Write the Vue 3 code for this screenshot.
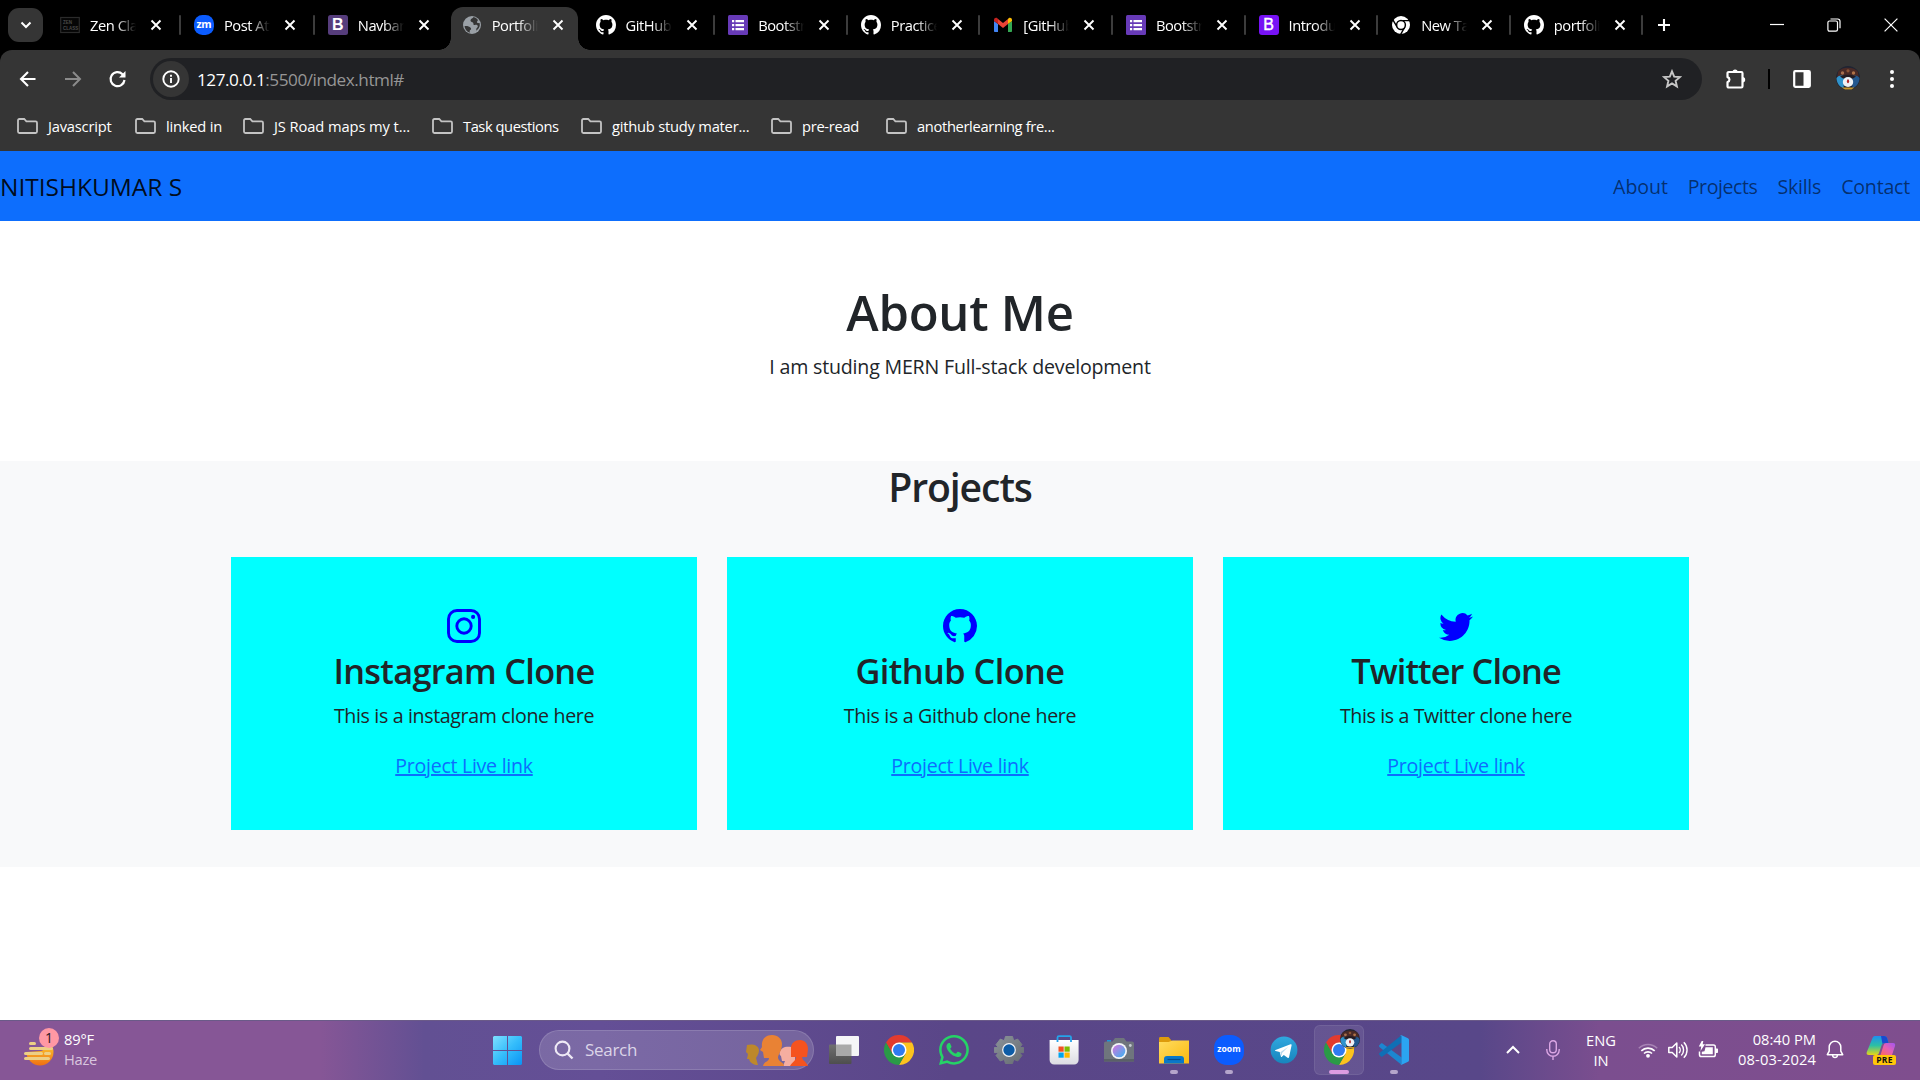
<script setup>
const tabs = [
  { icon: 'zen', label: 'ZEN CLASS', title: 'Zen Class' },
  { icon: 'zm', label: 'zm', title: 'Post Attendee' },
  { icon: 'boot4', label: 'B', title: 'Navbar · Boot' },
  { icon: 'globe', title: 'Portfolio', active: true },
  { icon: 'github', title: 'GitHub - n' },
  { icon: 'forms', title: 'Bootstrap' },
  { icon: 'github', title: 'Practice' },
  { icon: 'gmail', title: '[GitHub] A' },
  { icon: 'forms', title: 'Bootstrap' },
  { icon: 'boot5', label: 'B', title: 'Introduction' },
  { icon: 'chrome-mono', title: 'New Tab' },
  { icon: 'github', title: 'portfolio' },
]
const bookmarks = [
  { text: 'Javascript', width: 118, spacing: -0.2 },
  { text: 'linked in', width: 108, spacing: -0.21 },
  { text: 'JS Road maps my t...', width: 189, spacing: -0.09 },
  { text: 'Task questions', width: 149, spacing: -0.45 },
  { text: 'github study mater...', width: 190, spacing: -0.22 },
  { text: 'pre-read', width: 115, spacing: -0.3 },
  { text: 'anotherlearning fre...', width: 180, spacing: -0.34 },
]
const links = [
  { text: 'About', spacing: -0.1 },
  { text: 'Projects', spacing: -0.45 },
  { text: 'Skills', spacing: -0.25 },
  { text: 'Contact', spacing: -0.22 },
]
const projects = [
  { icon: 'insta', name: 'Instagram Clone', nameSpacing: -0.7, text: 'This is a instagram clone here', textSpacing: -0.35 },
  { icon: 'github', name: 'Github Clone', nameSpacing: -0.55, text: 'This is a Github clone here', textSpacing: -0.32 },
  { icon: 'twitter', name: 'Twitter Clone', nameSpacing: -0.89, text: 'This is a Twitter clone here', textSpacing: -0.38 },
]
const apps = [
  { icon: 'taskview' },
  { icon: 'chrome' },
  { icon: 'whatsapp' },
  { icon: 'settings' },
  { icon: 'store' },
  { icon: 'camera' },
  { icon: 'explorer', open: true },
  { icon: 'zoom', label: 'zoom', open: true },
  { icon: 'telegram' },
  { icon: 'chrome', active: true },
  { icon: 'vscode', open: true },
]
</script>

<template>
  <div class="screen">
    <svg class="sprite" aria-hidden="true">
      <defs>
        <linearGradient id="gWin" x1="0" y1="0" x2="1" y2="1"><stop offset="0" stop-color="#7fe0ff" /><stop offset=".5" stop-color="#35bdfb" /><stop offset="1" stop-color="#0a93f5" /></linearGradient>
        <linearGradient id="gSun" x1="0" y1="0" x2="0" y2="1"><stop offset="0" stop-color="#fbc02d" /><stop offset="1" stop-color="#ee6f12" /></linearGradient>
        <linearGradient id="gFolder" x1="0" y1="0" x2="1" y2="1"><stop offset="0" stop-color="#ffdc60" /><stop offset="1" stop-color="#fbb90f" /></linearGradient>
        <linearGradient id="gGear" x1="0" y1="0" x2="1" y2="1"><stop offset="0" stop-color="#8b9399" /><stop offset="1" stop-color="#666c72" /></linearGradient>
        <linearGradient id="gLens" x1="0" y1="0" x2="1" y2="1"><stop offset="0" stop-color="#d873dc" /><stop offset="1" stop-color="#37b4f2" /></linearGradient>
        <linearGradient id="gBag" x1="0" y1="0" x2="0" y2="1"><stop offset="0" stop-color="#ffffff" /><stop offset="1" stop-color="#dcdce2" /></linearGradient>
        <linearGradient id="gTele" x1="0" y1="0" x2="0" y2="1"><stop offset="0" stop-color="#30a8df" /><stop offset="1" stop-color="#1885bd" /></linearGradient>
        <linearGradient id="gDark" x1="0" y1="0" x2="0" y2="1"><stop offset="0" stop-color="#707070" /><stop offset="1" stop-color="#4e4e4e" /></linearGradient>
        <linearGradient id="gCopA" x1="0" y1="0" x2="0" y2="1"><stop offset="0" stop-color="#1d8ff0" /><stop offset=".5" stop-color="#2cc0a4" /><stop offset="1" stop-color="#e8d616" /></linearGradient>
        <linearGradient id="gCopB" x1="0" y1="1" x2="1" y2="0"><stop offset="0" stop-color="#ff6a5c" /><stop offset=".5" stop-color="#e560b4" /><stop offset="1" stop-color="#a055f4" /></linearGradient>
      </defs>

      <symbol id="zen" viewBox="0 0 20 20"><rect x=".7" y="2.5" width="18.6" height="15" fill="#060606" stroke="#2b2b2b" stroke-width="1.2" /></symbol>
      <symbol id="zm" viewBox="0 0 20 20"><rect width="20" height="20" rx="8.5" fill="#0b5cff" /></symbol>
      <symbol id="boot4" viewBox="0 0 20 20"><rect width="20" height="20" rx="2.5" fill="#563d7c" /></symbol>
      <symbol id="boot5" viewBox="0 0 20 20"><rect width="20" height="20" rx="3" fill="#7712f5" /></symbol>
      <symbol id="globe" viewBox="0 0 20 20"><circle cx="10" cy="10" r="9" fill="#9aa0a6" /><path d="M2.500 11.200c2.200-.4 4.900.2 6.100 1.500.9 1 .4 1.900-.4 2.400-.7.500-.5 1.600-.4 2.700A8.300 8.300 0 0 1 2.500 11.200zM11.500 2.100c-.3 1.300-2 1.500-2.700 2.500-.6.900-.2 2 .9 2.300 1.200.3 1.900 1 1.700 2-.1.900.8 1.300 1.600 1 1.200-.4 2.500.2 2.800 1.100.2.800-.5 1.600-1.300 2.200l-.4 2.500a8.100 8.100 0 0 0 3.700-7.500l-1.900-.2c-1.100-.1-1.300-1.100-.6-1.700l.7-1.200a8 8 0 0 0-4.500-3z" fill="#353535" /></symbol>
      <symbol id="github" viewBox="0 0 16 16"><path fill="currentColor" d="M8 0C3.58 0 0 3.58 0 8c0 3.54 2.29 6.53 5.47 7.59.4.07.55-.17.55-.38 0-.19-.01-.82-.01-1.49-2.01.37-2.53-.49-2.69-.94-.09-.23-.48-.94-.82-1.13-.28-.15-.68-.52-.01-.53.63-.01 1.08.58 1.23.82.72 1.21 1.87.87 2.33.66.07-.52.28-.87.51-1.07-1.78-.2-3.64-.89-3.64-3.95 0-.87.31-1.59.82-2.15-.08-.2-.36-1.02.08-2.12 0 0 .67-.21 2.2.82.64-.18 1.32-.27 2-.27s1.36.09 2 .27c1.53-1.04 2.2-.82 2.2-.82.44 1.1.16 1.92.08 2.12.51.56.82 1.27.82 2.15 0 3.07-1.87 3.75-3.65 3.95.29.25.54.73.54 1.48 0 1.07-.01 1.93-.01 2.2 0 .21.15.46.55.38A8.01 8.01 0 0 0 16 8c0-4.42-3.58-8-8-8" /></symbol>
      <symbol id="forms" viewBox="0 0 20 20"><rect width="20" height="20" rx="1.5" fill="#673ab7" /><path d="M4 5h2.200v2.200H4zM7.500 5H16v2.200H7.500zM4 9h2.200v2.200H4zM7.500 9H16v2.200H7.500zM4 13h2.200v2.200H4zM7.500 13H16v2.200H7.500z" fill="#fff" /></symbol>
      <symbol id="gmail" viewBox="0 0 20 20"><path d="M1 6v10.200c0 .5.3.8.8.8H5V9z" fill="#4285f4" /><path d="M15 9v8h3.200c.5 0 .8-.3.8-.8V6z" fill="#34a853" /><path d="M15 4v5l4-3V4.800C19 3 17 2.300 15.600 3.300z" fill="#fbbc04" /><path d="M5 9V4l5 3.900L15 4v5l-5 3.900z" fill="#ea4335" /><path d="M1 4.800V6l4 3V4l-.6-.7C3 2.300 1 3 1 4.800z" fill="#c5221f" /></symbol>
      <symbol id="chrome-mono" viewBox="0 0 20 20"><circle cx="10" cy="10" r="9" fill="#fff" /><path d="M10 5.600h8.600M6.200 12.200 1.900 4.800M13.800 12.200 9.500 19.600" stroke="#000" stroke-width="1.4" /><circle cx="10" cy="10" r="4.400" fill="#fff" stroke="#000" stroke-width="1.5" /></symbol>

      <symbol id="insta" viewBox="0 0 34 34"><rect x="1.5" y="1.5" width="31" height="31" rx="8.5" fill="none" stroke="currentColor" stroke-width="2.9" /><circle cx="17" cy="17" r="7.200" fill="none" stroke="currentColor" stroke-width="2.900" /><circle cx="26.100" cy="7.900" r="2.050" fill="currentColor" /></symbol>
      <symbol id="twitter" viewBox="0 0 16 16"><path fill="currentColor" d="M5.026 15c6.038 0 9.341-5.003 9.341-9.334q.002-.211-.006-.422A6.700 6.700 0 0 0 16 3.542a6.700 6.700 0 0 1-1.889.518 3.300 3.300 0 0 0 1.447-1.817 6.500 6.500 0 0 1-2.087.793A3.286 3.286 0 0 0 7.875 6.030a9.320 9.320 0 0 1-6.767-3.429 3.290 3.290 0 0 0 1.018 4.382A3.300 3.300 0 0 1 .64 6.575v.045a3.290 3.290 0 0 0 2.632 3.218 3.200 3.200 0 0 1-.865.115 3 3 0 0 1-.614-.057 3.280 3.280 0 0 0 3.067 2.277A6.600 6.600 0 0 1 .78 13.580a6 6 0 0 1-.78-.045A9.340 9.340 0 0 0 5.026 15" /></symbol>
      <symbol id="photo" viewBox="0 0 24 24"><circle cx="12" cy="12" r="12" fill="#1f2433" /><path d="M2 6c3-5 16-6 20 0l1 7H1z" fill="#4a2a26" /><path d="M.5 12c2-3 5-3 8-2l-1 12c-4-1-7-5-7-10z" fill="#2f93cc" /><path d="M23.500 12c-2-3-5-3-8-2l1 12c4-1 7-5 7-10z" fill="#23588f" /><circle cx="6.500" cy="7" r="1.700" fill="#a9704f" /><circle cx="12" cy="4.800" r="1.600" fill="#8c5334" /><circle cx="17.500" cy="7" r="1.700" fill="#b07348" /><path d="M4 10.500c4-2.500 12-2.500 16 0l-3 2H7z" fill="#241c22" /><ellipse cx="12" cy="16" rx="5.200" ry="5" fill="#eef2f6" /><ellipse cx="12" cy="15.300" rx="1.100" ry="2" fill="#b32a2a" /><path d="M5.500 21.500h13l-3 2H9z" fill="#c9982a" /></symbol>

      <symbol id="taskview" viewBox="0 0 30 30"><rect x="0" y="9.500" width="22.500" height="19.500" rx="1" fill="url(#gDark)" /><rect x="7" y="1" width="23" height="20" rx="1" fill="#f5f5f7" /><rect x="7" y="9.500" width="15.500" height="11.500" fill="#a9a9a9" /></symbol>
      <symbol id="chrome" viewBox="0 0 30 30"><path d="M2 7.500A15 15 0 0 1 28 7.500H15L8.500 18.750z" fill="#e33b2e" /><path d="M28 7.500A15 15 0 0 1 15 30l6.500-11.250L15 7.500z" fill="#fcc31e" /><path d="M15 30A15 15 0 0 1 2 7.500l6.500 11.250h13z" fill="#2a9a47" /><circle cx="15" cy="15" r="7.500" fill="#fff" /><circle cx="15" cy="15" r="6" fill="#2f7bf0" /></symbol>
      <symbol id="whatsapp" viewBox="0 0 16 16"><path fill="#25d366" d="M13.601 2.326A7.850 7.850 0 0 0 7.994 0C3.627 0 .068 3.558.064 7.926c0 1.399.366 2.760 1.057 3.965L0 16l4.204-1.102a7.900 7.900 0 0 0 3.790.965h.004c4.368 0 7.926-3.558 7.930-7.930A7.900 7.900 0 0 0 13.600 2.326zM7.994 14.521a6.600 6.600 0 0 1-3.356-.92l-.24-.144-2.494.654.666-2.433-.156-.251a6.560 6.560 0 0 1-1.007-3.505c0-3.626 2.957-6.584 6.591-6.584a6.560 6.560 0 0 1 4.660 1.931 6.560 6.560 0 0 1 1.928 4.660c-.004 3.639-2.961 6.592-6.592 6.592m3.615-4.934c-.197-.099-1.170-.578-1.353-.646-.182-.065-.315-.099-.445.099-.133.197-.513.646-.627.775-.114.133-.232.148-.43.050-.197-.1-.836-.308-1.592-.985-.59-.525-.985-1.175-1.103-1.372-.114-.198-.011-.304.088-.403.087-.088.197-.232.296-.346.1-.114.133-.198.198-.33.065-.134.034-.248-.015-.347-.05-.099-.445-1.076-.612-1.470-.16-.389-.323-.335-.445-.34-.114-.007-.247-.007-.38-.007a.73.73 0 0 0-.529.247c-.182.198-.691.677-.691 1.654s.71 1.916.81 2.049c.098.133 1.394 2.132 3.383 2.992.47.205.84.326 1.129.418.475.152.904.129 1.246.080.38-.058 1.171-.48 1.338-.943.164-.464.164-.86.114-.943-.049-.084-.182-.133-.38-.232" /></symbol>
      <symbol id="settings" viewBox="0 0 30 30"><path d="M11.500 1.500h7l1.200 4.200 4-1.600L28 9.700 25.400 12.600H29.600v5h-4.200L28 20.500 23.700 26l-4-1.600-1.200 4.100h-7l-1.200-4.100-4 1.600L2 20.500l2.600-2.900H.4v-5h4.200L2 9.700 6.300 4.100l4 1.600z" fill="url(#gGear)" stroke="url(#gGear)" stroke-width="1" stroke-linejoin="round" /><circle cx="15" cy="15" r="6.900" fill="#f2f5f8" /><circle cx="15" cy="15" r="5.700" fill="#0d5ca6" /></symbol>
      <symbol id="store" viewBox="0 0 30 30"><path d="M8.500 7V2.600c0-.8.500-1.400 1.400-1.400h10.700c.9 0 1.400.6 1.400 1.400V7" fill="none" stroke="#25a3ea" stroke-width="1.800" /><path d="M.6 5h29v20a4.500 4.500 0 0 1-4.500 4.500h-20A4.500 4.500 0 0 1 .6 25z" fill="url(#gBag)" /><path d="M7.600 5h1.800v2H7.600zM21.100 5h1.800v2h-1.800z" fill="#25a3ea" /><path d="M9.500 11.500h5.200v5.200H9.500z" fill="#f25022" /><path d="M15.500 11.500h5.200v5.200h-5.200z" fill="#7fba00" /><path d="M9.500 17.500h5.200v5.200H9.500z" fill="#00a4ef" /><path d="M15.500 17.500h5.200v5.200h-5.200z" fill="#ffb900" /></symbol>
      <symbol id="camera" viewBox="0 0 30 30"><path d="M3 5h4v3H3z" fill="#1b95d8" /><path d="M0 8.500C0 7.200.8 6.500 2 6.500h6.500L11 3h9l2.500 3.500H28c1.200 0 2 .7 2 2V26.500H0z" fill="#6f757d" /><path d="M0 24h30v2.500H0z" fill="#5a6067" /><circle cx="15" cy="16" r="8" fill="#f4f5f8" /><circle cx="15" cy="16" r="6.300" fill="url(#gLens)" /><circle cx="26.300" cy="10.500" r="1.400" fill="#c5cbd2" /></symbol>
      <symbol id="explorer" viewBox="0 0 30 30"><path d="M0 3.500C0 2.500.6 2 1.500 2h8l3 3.500V12H0z" fill="#dd9b0c" /><path d="M0 10V7h9.500l4-1.500H30v23H0z" fill="url(#gFolder)" /><path d="M5 28.500V24c0-2 1-3 3-3h14c2 0 3 1 3 3v4.500z" fill="#0a78c8" /><path d="M8.500 24.500h13" stroke="#064c8c" stroke-width="1.200" /></symbol>
      <symbol id="zoom" viewBox="0 0 30 30"><rect width="30" height="30" rx="13" fill="#0b5cff" /></symbol>
      <symbol id="telegram" viewBox="0 0 30 30"><circle cx="15" cy="15" r="13.400" fill="url(#gTele)" /><path d="M6.500 15 21.500 9.200c.7-.2 1.300.2 1.100 1.100l-2.500 11.800c-.2.900-.8 1-1.500.6l-3.800-2.800-1.900 1.800c-.4.400-.9.300-1-.3l-1.200-4.300-4.100-1.200c-.8-.2-.8-.7-.1-.9z" fill="#fff" /><path d="m11.300 17.200 8-5.400-6.200 6.200-.4 3.200z" fill="#b9d9ec" /></symbol>
      <symbol id="vscode" viewBox="0 0 30 30"><path d="M.3 10.300 2 8.500c.4-.4 1-.4 1.500-.1L22.600 22.500V29.500c-.6-.1-1-.4-1.400-.7L.4 11.900c-.5-.5-.5-1.100-.1-1.600z" fill="#1c86d1" /><path d="M.3 19.700 2 21.500c.4.400 1 .4 1.500.1L22.600 7.500V.5c-.6.100-1 .4-1.400.7L.4 18.100c-.5.500-.5 1.100-.1 1.600z" fill="#0f6fb5" /><path d="M22.600.3 29 3.200c.6.300 1 .9 1 1.600v20.400c0 .7-.4 1.300-1 1.600l-6.400 2.900c-.5.100-1-.1-1.400-.5.500.4 1.300.1 1.300-.7V1.500c0-.8-.8-1.100-1.300-.7.400-.4.900-.6 1.400-.5z" fill="#2ba4f1" /></symbol>
    </svg>

    <header class="browser">
      <div class="strip">
        <div class="tabsearch"><svg width="12" height="8" viewBox="0 0 12 8"><path d="M1.500 1.500 6 6l4.500-4.500" fill="none" stroke="#fff" stroke-width="2" /></svg></div>
        <div class="tabs">
          <div v-for="(tab, i) in tabs" :key="i" class="tab" :class="{ active: tab.active, bar: !tab.active && i !== 2, early: i < 4 }">
            <div class="favicon">
              <svg width="20" height="20"><use :href="'#' + tab.icon" /></svg>
              <span v-if="tab.label" class="label" :class="tab.icon">{{ tab.label }}</span>
            </div>
            <span class="title">{{ tab.title }}</span>
            <svg class="close" viewBox="0 0 12 12"><path d="m1.500 1.500 9 9m0-9-9 9" stroke="#fff" stroke-width="1.900" /></svg>
          </div>
        </div>
        <svg class="plus" viewBox="0 0 14 14"><path d="M7 1v12M1 7h12" stroke="#fff" stroke-width="2.100" /></svg>
        <div class="controls">
          <svg width="14" height="14" viewBox="0 0 14 14"><path d="M0 6.500h14" stroke="#fff" stroke-width="1.200" /></svg>
          <svg width="14" height="14" viewBox="0 0 14 14"><rect x=".9" y="3" width="9.600" height="10.200" rx="1.600" fill="none" stroke="#fff" stroke-width="1.200" /><path d="M3.500 1h7.200a2.300 2.300 0 0 1 2.300 2.300v7" fill="none" stroke="#fff" stroke-width="1.200" /></svg>
          <svg width="14" height="14" viewBox="0 0 14 14"><path d="m.6.600 12.800 12.800M13.400.6.600 13.400" stroke="#fff" stroke-width="1.200" /></svg>
        </div>
      </div>

      <div class="toolbar">
        <svg class="nav" viewBox="0 0 20 20"><path d="M17.500 10H3.500M10 3l-7 7 7 7" fill="none" stroke="#fff" stroke-width="2.100" /></svg>
        <svg class="nav" viewBox="0 0 20 20"><path d="M2 10h14.500M10 3l7 7-7 7" fill="none" stroke="#8b8b8b" stroke-width="2" /></svg>
        <svg class="nav" viewBox="0 0 20 20"><path d="M16.500 11A7 7 0 1 1 14.500 5.200l2 2" fill="none" stroke="#fff" stroke-width="2.200" /><path d="M17.500 2v6.500H11z" fill="#fff" /></svg>
        <div class="omnibox">
          <div class="info"><svg width="18" height="18" viewBox="0 0 18 18"><circle cx="9" cy="9" r="7.700" fill="none" stroke="#fff" stroke-width="1.900" /><path d="M9 8v5M9 4.800v1.900" stroke="#fff" stroke-width="1.900" /></svg></div>
          <span class="url">127.0.0.1<i>:5500/index.html#</i></span>
          <svg class="star" viewBox="0 0 20 20"><path d="m10 2.300 2.200 5.300 5.700.5-4.300 3.700 1.300 5.600-4.900-3-4.900 3 1.300-5.600L2.100 8.100l5.700-.5z" fill="none" stroke="#c7c7c7" stroke-width="1.900" /></svg>
        </div>
        <div class="actions">
          <svg width="22" height="22" viewBox="0 0 22 22"><path d="M2.500 5.200c0-.7.500-1.200 1.200-1.200h12.600c.7 0 1.200.5 1.200 1.200v13.100c0 .7-.5 1.200-1.200 1.200H3.700c-.7 0-1.200-.5-1.200-1.200v-4.200c2.600-.8 2.600-4.200 0-5z" fill="none" stroke="#fff" stroke-width="2.200" stroke-linejoin="round" /><path d="M7.500 4a2.600 2.600 0 0 1 5.200 0zM17.500 9a2.700 2.700 0 0 1 0 5.400z" fill="#fff" /></svg>
          <b class="rule"></b>
          <svg width="18" height="18" viewBox="0 0 18 18"><rect x="1.200" y="1.200" width="15.600" height="15.600" rx="1" fill="none" stroke="#fff" stroke-width="2.200" /><path d="M10.500 1H17v16h-6.500z" fill="#fff" /></svg>
          <svg class="avatar"><use href="#photo" /></svg>
          <svg width="4" height="18" viewBox="0 0 4 18"><circle cx="2" cy="2" r="2" fill="#fff" /><circle cx="2" cy="9" r="2" fill="#fff" /><circle cx="2" cy="16" r="2" fill="#fff" /></svg>
        </div>
      </div>

      <div class="bookmarks">
        <div v-for="b in bookmarks" :key="b.text" class="bookmark" :style="{ width: b.width + 'px', letterSpacing: b.spacing + 'px' }">
          <svg width="21" height="16" viewBox="0 0 21 16"><path d="M1 2.400C1 1.500 1.500 1 2.400 1h4.800l2.200 2.300h9.200c.9 0 1.400.5 1.400 1.400v8.900c0 .9-.5 1.400-1.400 1.400H2.400c-.9 0-1.400-.5-1.400-1.400z" fill="none" stroke="#c4c4c4" stroke-width="1.800" /></svg>
          <span>{{ b.text }}</span>
        </div>
      </div>
    </header>

    <main class="page">
      <nav class="navbar">
        <a class="brand">NITISHKUMAR S</a>
        <div class="links"><a v-for="l in links" :key="l.text" :style="{ letterSpacing: l.spacing + 'px' }">{{ l.text }}</a></div>
      </nav>
      <section class="about">
        <h1>About Me</h1>
        <p>I am studing MERN Full-stack development</p>
      </section>
      <section class="projects">
        <h2>Projects</h2>
        <div class="row">
          <article v-for="p in projects" :key="p.name" class="card">
            <svg class="brandicon"><use :href="'#' + p.icon" /></svg>
            <h3 :style="{ letterSpacing: p.nameSpacing + 'px' }">{{ p.name }}</h3>
            <p :style="{ letterSpacing: p.textSpacing + 'px' }">{{ p.text }}</p>
            <a>Project Live link</a>
          </article>
        </div>
      </section>
    </main>

    <footer class="taskbar">
      <div class="weather">
        <div class="haze">
          <svg width="32" height="36" viewBox="0 0 32 36"><path d="M2.500 20a13.500 13.500 0 0 0 27 0c0-2-.4-4-1.200-5.500L17 19z" fill="url(#gSun)" /><path d="M6.500 11.500h4M6.500 16.500h21M1.500 21.500h16M21.500 21.500h4M1.500 26.500h23" stroke="#edcf85" stroke-width="3" stroke-linecap="round" /></svg>
          <span class="badge">1</span>
        </div>
        <div class="lines"><span class="temp">89°F</span><span class="cond">Haze</span></div>
      </div>

      <div class="center">
        <svg width="29" height="29" viewBox="0 0 29 29"><path d="M1 0h13v14H0V1zM15 0h13l1 1v13H15zM0 15h14v14H1l-1-1zM15 15h14v13l-1 1H15z" fill="url(#gWin)" /></svg>
        <div class="search">
          <svg width="20" height="20" viewBox="0 0 20 20"><circle cx="8.500" cy="8.500" r="6.900" fill="none" stroke="#eee9f5" stroke-width="2.100" /><path d="m13.500 13.500 5 5" stroke="#eee9f5" stroke-width="2.400" /></svg>
          <span>Search</span>
          <svg class="people" width="64" height="32" viewBox="0 0 64 32"><path d="M2 10c4-1 11-1 12 5 0 4-2 6-3 8l2 7c-4 0-8-2-9-6H2l1-5-2-2z" fill="#bd882b" /><path d="M36 21c-3-1-1-8 4-9s10 0 10 4v15H38l2-5h-3z" fill="#f5aea0" /><path d="M18 31c1-5 6-4 6-8h-5l-1-6-3-2 2-3C16 5 20 0 27 0c6 0 10 4 10 9 0 6-3 9-4 13 0 5 6 5 6 9z" fill="#e98234" /><path d="M46 22V13c0-5 4-8 9-8 5 0 8 4 8 9l-1 8h-5l1 3c2 1 4 4 5 6H45c2-4 6-5 6-9z" fill="#f5531f" /></svg>
        </div>
        <div class="apps">
          <div v-for="(a, i) in apps" :key="i" class="app" :class="{ active: a.active, open: a.open }">
            <svg class="appicon"><use :href="'#' + a.icon" /></svg>
            <span v-if="a.label" class="applabel">{{ a.label }}</span>
            <svg v-if="a.active" class="profile"><use href="#photo" /></svg>
          </div>
        </div>
      </div>

      <div class="tray">
        <svg width="14" height="10" viewBox="0 0 14 10"><path d="m1 8 6-6 6 6" fill="none" stroke="#fff" stroke-width="2" /></svg>
        <svg class="mic" width="14" height="20" viewBox="0 0 14 20"><rect x="3.700" y=".8" width="6.600" height="12" rx="3.300" fill="none" stroke="#dba6e4" stroke-width="1.400" /><path d="M.8 9v1a6.200 6.200 0 0 0 12.400 0V9M7 16.200V20" fill="none" stroke="#dba6e4" stroke-width="1.400" /></svg>
        <div class="lang lines"><span>ENG</span><span>IN</span></div>
        <svg class="wifi" width="20" height="16" viewBox="0 0 20 16"><path d="M.8 6.200a13 13 0 0 1 18.400 0" fill="none" stroke="#a783b4" stroke-width="1.500" /><path d="M3.300 8.900a9.500 9.500 0 0 1 13.400 0M6 11.500a5.700 5.700 0 0 1 8 0" fill="none" stroke="#fff" stroke-width="1.600" /><circle cx="10" cy="13.800" r="1.900" fill="#fff" /></svg>
        <svg width="20" height="18" viewBox="0 0 20 18"><path d="M.8 6.500v5h3.400L8.800 16V2L4.200 6.500z" fill="none" stroke="#fff" stroke-width="1.500" stroke-linejoin="round" /><path d="M11 6a4.300 4.300 0 0 1 0 6M13.300 3.500a7.800 7.800 0 0 1 0 11M15.800 1.200a11 11 0 0 1 0 15.600" fill="none" stroke="#fff" stroke-width="1.400" /></svg>
        <svg width="20" height="18" viewBox="0 0 20 18"><path d="M7.500 4h8a1.800 1.800 0 0 1 1.800 1.800v7.900a1.800 1.800 0 0 1-1.800 1.800H3.300a1.800 1.800 0 0 1-1.800-1.800V10.500" fill="none" stroke="#fff" stroke-width="1.500" /><path d="M7.500 6.200h7.300v7H3.800v-2.500l2.700-.5z" fill="#fff" /><path d="M17.800 7.500h1.200c.6 0 1 .4 1 1v2.400c0 .6-.4 1-1 1h-1.200zM3.700 0h1.600l-.6 3.200H7L2.500 10l.7-4.600H.8z" fill="#fff" /></svg>
        <div class="clock lines"><span>08:40 PM</span><span class="date">08-03-2024</span></div>
        <svg width="18" height="20" viewBox="0 0 18 20"><path d="M9 1.200c-3.300 0-5.800 2.600-5.800 5.900v4L1.300 14.700h15.400l-1.900-3.600v-4c0-3.300-2.500-5.900-5.800-5.900zM6.500 15c.2 1.700 1.100 2.600 2.500 2.600s2.300-.9 2.500-2.600" fill="none" stroke="#fff" stroke-width="1.500" stroke-linejoin="round" /></svg>
        <div class="copilot">
          <svg width="30" height="30" viewBox="0 0 30 30"><path d="M6.500 3C7 1.500 8 1 9.500 1H18c2 0 2.800 1 3.300 2.500L22.500 8H19c-2 0-3 1-3.500 2.500L13 18c-.6 1.600-1.500 2-3 2H3C.9 20 .2 18.800.8 17z" fill="url(#gCopA)" /><path d="M15 1h3c2 0 2.800 1 3.300 2.500L22.500 8H19c-1 0-1.900.3-2.500 1z" fill="#1949cf" /><path d="M17.500 10.500C18 8.800 19 8 20.500 8H27c1.800 0 2.600 1.200 2 3l-3 9H14.500z" fill="url(#gCopB)" /></svg>
          <span class="pre">PRE</span>
        </div>
      </div>
    </footer>
  </div>
</template>

<style>
body { margin: 0; background: #fff; overflow: hidden; }
</style>

<style scoped>
* { box-sizing: border-box; }
.screen { width: 1920px; height: 1080px; display: flex; flex-direction: column; overflow: hidden; background: #fff; font-family: "Open Sans", "Noto Sans", sans-serif; color: #212529; white-space: nowrap; }
.sprite { position: absolute; width: 0; height: 0; }
svg { display: block; flex: none; }
h1, h2, h3, p { margin: 0; }

.browser { height: 151px; background: #000; display: flex; flex-direction: column; font-size: 14.7px; color: #fff; }
.strip { height: 50px; display: flex; align-items: center; padding-left: 8px; }
.tabsearch { width: 35px; height: 34px; border-radius: 11px; background: #353535; display: flex; align-items: center; justify-content: center; }
.tabs { display: flex; height: 50px; margin-left: 5px; }
.tab { position: relative; width: 132.6px; height: 50px; padding-left: 12px; display: flex; align-items: center; }
.tab.early { width: 133.9px; }
.tab.active { height: 43px; margin-top: 7px; padding-bottom: 7px; }
.tab.active::before { content: ""; position: absolute; left: 1px; right: 6px; top: 0; bottom: 0; background: #353535; border-radius: 12px 12px 0 0; }
.tab.active::after { content: ""; position: absolute; left: -11px; right: -6px; bottom: 0; height: 12px; background: radial-gradient(circle at 0 0, transparent 11.5px, #353535 12px) left / 12px 12px no-repeat, radial-gradient(circle at 100% 0, transparent 11.5px, #353535 12px) right / 12px 12px no-repeat; }
.tab.bar::after { content: ""; position: absolute; right: 1px; top: 15px; width: 2px; height: 20px; background: #3c3c3c; border-radius: 1px; }
.favicon { position: relative; width: 20px; height: 20px; color: #fff; }
.label { position: absolute; left: 0; top: 0; width: 20px; height: 20px; line-height: 20px; text-align: center; font-weight: 700; }
.label.zm { font-size: 10.5px; line-height: 18px; letter-spacing: -.3px; }
.label.boot4, .label.boot5 { font-family: "Liberation Sans", sans-serif; font-size: 16px; }
.label.boot5 { font-weight: 400; -webkit-text-stroke: .4px #fff; }
.label.zen { padding: 4.5px 0 0 3px; font-family: "Liberation Sans", sans-serif; font-size: 4.5px; line-height: 6px; text-align: left; white-space: normal; color: #4a4a4a; }
.title { position: relative; width: 47px; margin-left: 10px; overflow: hidden; letter-spacing: -.45px; line-height: 22px; -webkit-mask-image: linear-gradient(90deg, #000 55%, transparent 98%); mask-image: linear-gradient(90deg, #000 55%, transparent 98%); }
.close { position: relative; width: 12px; height: 12px; margin-left: 13px; }
.plus { width: 14px; height: 14px; margin-left: 13px; }
.controls { display: flex; gap: 43px; margin-left: auto; padding-right: 22px; }
.toolbar { height: 58px; background: #353535; border-radius: 12px 12px 0 0; display: flex; align-items: center; padding-left: 18px; }
.nav { width: 20px; height: 20px; margin-right: 25px; }
.omnibox { width: 1552px; height: 42px; margin-left: -3px; border-radius: 21px; background: #202124; display: flex; align-items: center; padding: 0 20px 0 3px; }
.info { width: 36px; height: 36px; border-radius: 50%; background: #353535; display: flex; align-items: center; justify-content: center; }
.url { margin: 1px 0 0 8px; font-size: 17.2px; letter-spacing: -.47px; line-height: 24px; }
.url i { font-style: normal; color: #969696; }
.star { width: 20px; height: 20px; margin-left: auto; }
.actions { display: flex; align-items: center; padding-left: 23px; }
.rule { width: 2px; height: 20px; background: #000; margin: 0 23px 0 21px; }
.avatar { width: 24px; height: 24px; margin: -3px 30px 0 25px; }
.bookmarks { height: 43px; background: #353535; display: flex; align-items: center; padding: 0 0 8px 17px; }
.bookmark { display: flex; align-items: center; gap: 10px; line-height: 20px; }

.page { height: 869px; }
.navbar { height: 70px; background: #0d6efd; display: flex; align-items: center; justify-content: space-between; padding: 2px 10px 0 0; }
.brand { font-size: 24.5px; line-height: 36px; color: rgba(0, 0, 0, .9); letter-spacing: -.03px; }
.links { display: flex; gap: 20px; font-size: 19.6px; line-height: 30px; color: rgba(0, 0, 0, .58); }
.about { height: 240px; padding-top: 61px; text-align: center; }
h1 { font-size: 49px; line-height: 60px; font-weight: 600; letter-spacing: -.25px; }
p { font-size: 19.6px; line-height: 30px; }
.about p { margin-top: 10px; letter-spacing: -.19px; }
.projects { height: 406px; background: #f8f9fa; text-align: center; }
h2 { padding-top: 1px; font-size: 39.2px; line-height: 50px; font-weight: 600; letter-spacing: -1.1px; }
.row { display: flex; justify-content: center; gap: 30px; margin-top: 45px; }
.card { width: 466px; height: 273px; background: #0ff; padding-top: 50px; display: flex; flex-direction: column; align-items: center; }
.brandicon { width: 34px; height: 34px; margin: 2px 0 7px; color: #00f; }
h3 { font-size: 34.3px; line-height: 42px; font-weight: 600; }
.card p { margin-top: 9px; }
.card a { margin-top: 20px; font-size: 19.6px; line-height: 30px; letter-spacing: -.28px; color: #0d6efd; text-decoration: underline; text-decoration-thickness: 2px; text-underline-offset: 1px; }

.taskbar { height: 60px; border-top: 1px solid #6a5a88; padding-bottom: 1px; display: flex; align-items: center; color: #fff; font-size: 14.7px; background: linear-gradient(90deg, #865696 0, #865696 320px, #625093 425px, #644f96 600px, #5a4688 950px, #584789 1480px, #7b4e8f 1600px, #7f4e8e 1920px); }
.weather { width: 493px; padding-left: 24px; display: flex; align-items: center; }
.haze { position: relative; width: 40px; }
.badge { position: absolute; left: 15px; top: -4px; width: 20px; height: 20px; border-radius: 50%; background: #ff98a4; color: #2b1520; font-size: 14px; line-height: 20px; text-align: center; }
.lines { display: flex; flex-direction: column; line-height: 20px; margin-top: -2px; }
.temp { letter-spacing: -.17px; }
.cond { color: #d9c6df; letter-spacing: -.28px; }
.center { display: flex; align-items: center; }
.search { width: 275px; height: 40px; margin-left: 17px; border-radius: 20px; background: rgba(255, 255, 255, .15); border: 1px solid rgba(255, 255, 255, .14); display: flex; align-items: center; padding-left: 14px; }
.search span { width: 54px; margin-left: 11px; font-size: 17px; letter-spacing: -.3px; color: #dcd5e8; line-height: 24px; }
.people { margin-left: 106px; margin-top: 2px; }
.apps { display: flex; margin-left: 2px; }
.app { position: relative; width: 55px; height: 50px; display: flex; align-items: center; justify-content: center; }
.app.active::before { content: ""; position: absolute; left: 3px; right: 2px; top: 0; bottom: 0; border-radius: 6px; background: rgba(255, 255, 255, .08); border: 1px solid rgba(255, 255, 255, .08); }
.app.open::after, .app.active::after { content: ""; position: absolute; bottom: 1px; width: 8px; height: 4px; border-radius: 2px; background: #b5a5cb; }
.app.active::after { width: 20px; background: #dd9ce2; }
.appicon { position: relative; width: 30px; height: 30px; }
.applabel { position: absolute; left: 13px; top: 18px; width: 30px; text-align: center; font-size: 8.6px; line-height: 12px; font-weight: 700; }
.profile { position: absolute; left: 29px; top: 4px; width: 20px; height: 20px; }
.tray { margin-left: auto; display: flex; align-items: center; padding-right: 24px; }
.mic { margin-left: 26px; }
.lang { width: 30px; margin: 0 0 0 26px; align-items: center; }
.wifi { margin: 0 10px 0 22px; }
.tray .wifi + svg { margin-right: 10px; }
.clock { width: 79px; margin-left: 19px; margin-right: 10px; align-items: flex-end; }
.date { letter-spacing: .13px; }
.copilot { position: relative; margin-left: 22px; }
.pre { position: absolute; left: 7px; top: 20px; width: 23px; height: 10px; border-radius: 2px; background: #ffc60a; color: #111; font-size: 8.5px; line-height: 10px; font-weight: 700; letter-spacing: .3px; text-align: center; }
</style>
